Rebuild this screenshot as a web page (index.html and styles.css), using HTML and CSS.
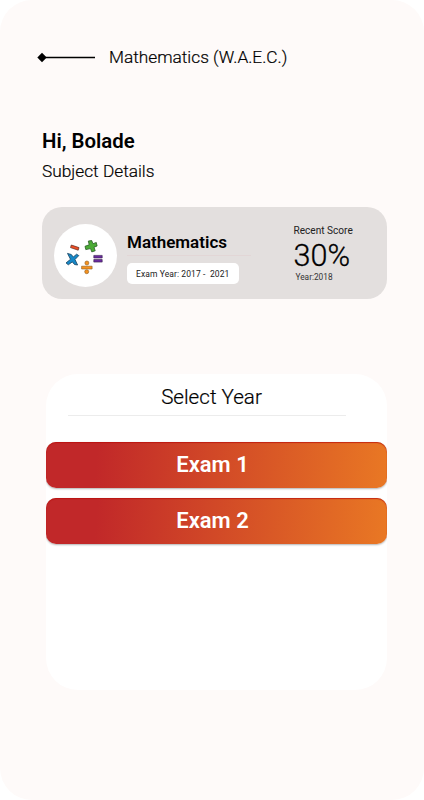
FILE: index.html
```
<!DOCTYPE html>
<html lang="en">
<head>
    <meta charset="UTF-8">
    <meta name="viewport" content="width=device-width, initial-scale=1.0">
    <title>Mathematics (W.A.E.C.)</title>
    <link rel="stylesheet" href="styles.css">
</head>
<body>
    <div class="screen">
        <header class="top-bar">
            <svg class="back" width="58" height="11" viewBox="0 0 58 11">
                <path d="M0.3 5.5L5 0.8L9.7 5.5L5 10.2Z" fill="#000"/>
                <path d="M5 5.5H58" stroke="#000" stroke-width="1.3"/>
            </svg>
            <span class="top-title">Mathematics (W.A.E.C.)</span>
        </header>

        <h1>Hi, Bolade</h1>
        <h2>Subject Details</h2>

        <div class="subject-card">
            <div class="subject-icon">
                <svg width="63" height="63" viewBox="0 0 63 63">
                    <!-- minus -->
                    <path d="M17.3 21L25 23.6L24.2 26.2L16.5 23.6Z" fill="#f04e23" stroke="#5a2a20" stroke-width="0.7"/>
                    <!-- plus -->
                    <path d="M34.3 17.1L37.7 16.5L38.9 19.7L42.3 18.5L43.1 22L40 23.2L41.2 26.8L37.8 27.9L36.5 24.6L31.8 25.6L31 22.3L35.2 20.8Z" fill="#4bab35" stroke="#285c25" stroke-width="0.8"/>
                    <!-- times -->
                    <path d="M13.5 29.4L17.3 30.5L19.3 33L22.6 30.2L24.8 31.6L21 35.5L23.6 41L20.5 40.5L18.3 37.9L14.3 40.8L12 38.9L16.5 35.3Z" fill="#1688c8" stroke="#18435f" stroke-width="0.8"/>
                    <!-- equals -->
                    <path d="M39.8 31.4H48.2V34H39.8ZM39.8 35.5H48.2V38.1H39.8Z" fill="#6a2c9e" stroke="#35204b" stroke-width="0.6"/>
                    <!-- divide -->
                    <g fill="#f6921e" stroke="#8a5a20" stroke-width="0.6">
                        <circle cx="32.9" cy="39" r="2"/>
                        <path d="M27.6 42.2H38.1V45H27.6Z"/>
                        <circle cx="32.7" cy="47.7" r="2"/>
                    </g>
                </svg>
            </div>
            <div class="subject-info">
                <h3>Mathematics</h3>
                <span class="exam-year">Exam Year: 2017 - &nbsp;2021</span>
            </div>
            <div class="score">
                <span class="score-label">Recent Score</span>
                <span class="score-value">30%</span>
                <span class="score-year">Year:2018</span>
            </div>
        </div>

        <div class="year-panel">
            <p class="panel-title">Select Year</p>
            <button class="exam-button">Exam 1</button>
            <button class="exam-button">Exam 2</button>
        </div>
    </div>
</body>
</html>
```
FILE: styles.css
```
body {
    font-family: Roboto, sans-serif;
    margin: 0;
    padding: 0;
    background-color: #fff;
    color: #000;
}
.screen {
    width: 424px;
    height: 800px;
    padding: 45px 37px 0 42px;
    border-radius: 32px;
    background-color: #fefaf9;
    box-sizing: border-box;
}
.top-bar {
    display: flex;
    align-items: center;
    height: 25px;
    margin-left: -5px;
}
.back {
    margin-right: 14px;
}
.top-title {
    margin-top: -2px;
    font-size: 17.3px;
    font-weight: 300;
    line-height: 24px;
    -webkit-text-stroke: 0.2px #000;
}
h1 {
    margin: 59px 0 0;
    font-size: 20.4px;
    font-weight: 600;
    line-height: 24px;
}
h2 {
    margin: 7px 0 0;
    font-size: 17.3px;
    font-weight: 300;
    line-height: 22px;
    -webkit-text-stroke: 0.2px #000;
}
.subject-card {
    display: flex;
    height: 92px;
    margin-top: 25px;
    padding-left: 12px;
    border-radius: 20px;
    background-color: #e3dfde;
    box-sizing: border-box;
}
.subject-icon {
    width: 63px;
    height: 63px;
    margin-top: 17px;
    border-radius: 50%;
    background-color: #fff;
}
.subject-info {
    width: 124px;
    margin: 24px 0 0 10px;
}
h3 {
    margin: 0 0 7px;
    padding-bottom: 2px;
    border-bottom: 1px solid #e2d6d6;
    font-size: 17px;
    font-weight: 600;
    line-height: 22px;
}
.exam-year {
    display: block;
    width: 112px;
    height: 21px;
    padding-left: 9px;
    border-radius: 5px;
    background-color: #fff;
    box-sizing: border-box;
    color: #222;
    font-size: 8.5px;
    letter-spacing: 0.1px;
    line-height: 22px;
    white-space: nowrap;
}
.score {
    display: flex;
    flex-direction: column;
    margin: 17px 0 0 42.5px;
    white-space: nowrap;
}
.score-label {
    color: #222;
    font-size: 10.1px;
    line-height: 14px;
}
.score-value {
    font-size: 30.6px;
    font-weight: 300;
    line-height: 36px;
    -webkit-text-stroke: 0.3px #000;
}
.score-year {
    padding-left: 2px;
    color: #333;
    font-size: 8.3px;
    line-height: 7px;
}
.year-panel {
    height: 316px;
    margin: 75px 0 0 4px;
    border-radius: 32px;
    background-color: #fff;
    overflow: hidden;
}
.panel-title {
    width: 278px;
    height: 42px;
    margin: 0 0 26px 22px;
    padding-left: 9px;
    border-bottom: 1px solid #ececec;
    box-sizing: border-box;
    font-size: 20.6px;
    font-weight: 300;
    line-height: 47px;
    text-align: center;
    -webkit-text-stroke: 0.2px #000;
}
.exam-button {
    display: block;
    width: 341px;
    height: 46px;
    margin-bottom: 10px;
    padding: 0 8px 1px 0;
    border: none;
    border-radius: 10px;
    background: linear-gradient(94deg, #c12829 15%, #e97824 100%);
    box-shadow: 0 1px 2px rgba(0, 0, 0, 0.3), inset 0 1px 1px rgba(184, 12, 8, 0.7);
    color: #fff;
    font-family: inherit;
    font-size: 22px;
    font-weight: 600;
    cursor: pointer;
}
```
